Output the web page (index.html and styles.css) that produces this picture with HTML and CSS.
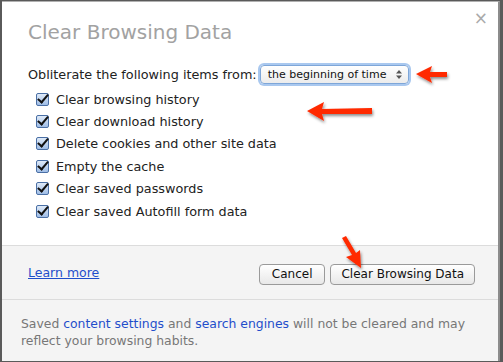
FILE: index.html
```html
<!DOCTYPE html>
<html lang="en">
<head>
<meta charset="UTF-8">
<title>Clear Browsing Data</title>
<link rel="stylesheet" href="styles.css">
</head>
<body>
  <div class="dialog">
    <span class="close">&#215;</span>
    <div class="content">
      <h1 class="title">Clear Browsing Data</h1>
      <div class="from-row">
        <span>Obliterate the following items from:</span>
        <div class="select">
          <span>the beginning of time</span>
          <svg class="spin" width="6" height="9" viewBox="0 0 6 9"><path d="M3 0L6 3.5H0Z M3 9L6 5.5H0Z" fill="#555"/></svg>
        </div>
      </div>
      <ul class="items">
        <li><span class="check"></span>Clear browsing history</li>
        <li><span class="check"></span>Clear download history</li>
        <li><span class="check"></span>Delete cookies and other site data</li>
        <li><span class="check"></span>Empty the cache</li>
        <li><span class="check"></span>Clear saved passwords</li>
        <li><span class="check"></span>Clear saved Autofill form data</li>
      </ul>
    </div>
    <div class="footer">
      <div class="actions">
        <a class="learn" href="#">Learn more</a>
        <div class="buttons">
          <button type="button" class="btn">Cancel</button>
          <button type="button" class="btn">Clear Browsing Data</button>
        </div>
      </div>
      <p class="note">Saved <a href="#">content settings</a> and <a href="#">search engines</a> will not be cleared and may reflect your browsing habits.</p>
    </div>

    <!-- red annotation arrows -->
    <svg class="arrows" width="498" height="360" viewBox="0 0 498 360">
      <defs>
        <filter id="sh" x="-30%" y="-30%" width="160%" height="160%">
          <feDropShadow dx="1" dy="2" stdDeviation="1.5" flood-color="#000" flood-opacity="0.45"/>
        </filter>
      </defs>
      <g fill="#ff2a00" filter="url(#sh)">
        <path d="M414 72 L430 64 L428 70 L445 70 L445 75 L428 75 L430 81 Z"/>
        <path d="M305 109 L322 100 L320 107 L370 106 L370 112 L320 112 L322 119 Z"/>
        <path d="M359 266 L344 255 L350 253 L340 236 L344 234 L354 251 L358 248 Z"/>
      </g>
    </svg>
  </div>
</body>
</html>
```

FILE: styles.css
```css
body {
  margin: 0;
  background-color: #5a5a5a;
  font-family: "DejaVu Sans", Verdana, sans-serif;
  font-size: 12.8px;
  color: #222222;
}

.dialog {
  position: relative;
  margin: 1px 0 0 2px;
  width: 498px;
  height: 360px;
  background-color: #ffffff;
  border-top: 1px solid #b0b0b0;
  display: flex;
  flex-direction: column;
  box-sizing: border-box;
  border-right: 2px solid #8c8c8c;
}

.close {
  position: absolute;
  top: 6px;
  right: 10px;
  font-size: 17px;
  color: #aaaaaa;
}

.content {
  padding: 17px 0 0 26px;
  height: 243px;
  box-sizing: border-box;
}

.title {
  margin: 0;
  font-size: 20px;
  font-weight: normal;
  line-height: 26px;
  color: #a2a2a2;
}

.from-row {
  display: flex;
  align-items: center;
  gap: 3px;
  margin-top: 20px;
}

.select {
  display: flex;
  align-items: center;
  justify-content: space-between;
  width: 134px;
  height: 17px;
  padding: 0 6px 0 7px;
  border: 1px solid #7ea6d8;
  border-radius: 4px;
  background: linear-gradient(#ffffff, #ececec);
  box-shadow: 0 0 0 2px #a9c8ef;
  font-size: 11px;
  color: #111111;
}

.items {
  list-style: none;
  margin: 4px 0 0 8px;
  padding: 0;
}

.items li {
  display: flex;
  align-items: center;
  height: 22.4px;
}

.check {
  position: relative;
  width: 11px;
  height: 11px;
  margin-right: 7px;
  border: 1px solid #4a6fa5;
  border-radius: 2px;
  background: linear-gradient(#dfeaf8, #9fbde6);
}

.check::after {
  content: "";
  position: absolute;
  left: 3px;
  top: -2px;
  width: 4px;
  height: 9px;
  border-right: 2px solid #111111;
  border-bottom: 2px solid #111111;
  transform: rotate(40deg);
}

.footer {
  flex: 1;
  background-color: #f4f4f4;
  border-top: 1px solid #dcdcdc;
}

.actions {
  display: flex;
  align-items: center;
  justify-content: space-between;
  height: 53px;
  padding: 0 23px 0 26px;
  border-bottom: 1px solid #dcdcdc;
}

.learn {
  color: #1f4ecb;
  font-size: 12.5px;
}

.buttons {
  display: flex;
  gap: 5px;
  margin-top: 3px;
}

.btn {
  height: 21px;
  padding: 0 12px;
  border: 1px solid #9a9a9a;
  border-radius: 4px;
  background: linear-gradient(#ffffff, #e8e8e8);
  font-family: inherit;
  font-size: 12px;
  color: #111111;
}

.btn + .btn {
  padding: 0 10px;
}

.note {
  margin: 15px 26px 0 19px;
  font-size: 12.4px;
  line-height: 17px;
  color: #777777;
}

.note a {
  color: #1f4ecb;
  text-decoration: none;
}

.arrows {
  position: absolute;
  left: 0;
  top: 0;
  pointer-events: none;
}
```
